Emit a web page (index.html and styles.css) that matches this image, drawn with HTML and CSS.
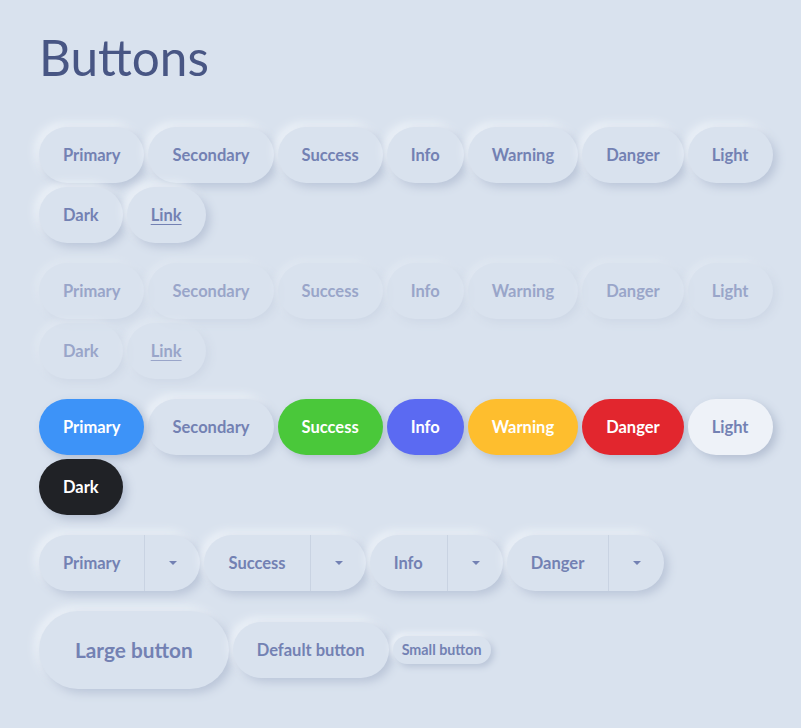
FILE: index.html
```html
<!DOCTYPE html>
<html lang="en">
<head>
<meta charset="utf-8">
<title>Buttons</title>
<link rel="stylesheet" href="styles.css">
</head>
<body>
<main class="page">
  <h1 class="title">Buttons</h1>

  <section class="row">
    <button class="btn">Primary</button>
    <button class="btn">Secondary</button>
    <button class="btn">Success</button>
    <button class="btn">Info</button>
    <button class="btn">Warning</button>
    <button class="btn">Danger</button>
    <button class="btn">Light</button>
    <button class="btn">Dark</button>
    <button class="btn btn-link">Link</button>
  </section>

  <section class="row row-disabled">
    <button class="btn" disabled>Primary</button>
    <button class="btn" disabled>Secondary</button>
    <button class="btn" disabled>Success</button>
    <button class="btn" disabled>Info</button>
    <button class="btn" disabled>Warning</button>
    <button class="btn" disabled>Danger</button>
    <button class="btn" disabled>Light</button>
    <button class="btn" disabled>Dark</button>
    <button class="btn btn-link" disabled>Link</button>
  </section>

  <section class="row">
    <button class="btn btn-primary">Primary</button>
    <button class="btn">Secondary</button>
    <button class="btn btn-success">Success</button>
    <button class="btn btn-info">Info</button>
    <button class="btn btn-warning">Warning</button>
    <button class="btn btn-danger">Danger</button>
    <button class="btn btn-light">Light</button>
    <button class="btn btn-dark">Dark</button>
  </section>

  <section class="row">
    <div class="btn-group">
      <button class="btn-part">Primary</button>
      <button class="btn-part btn-toggle" aria-label="Toggle"><span class="caret"></span></button>
    </div>
    <div class="btn-group">
      <button class="btn-part">Success</button>
      <button class="btn-part btn-toggle" aria-label="Toggle"><span class="caret"></span></button>
    </div>
    <div class="btn-group">
      <button class="btn-part">Info</button>
      <button class="btn-part btn-toggle" aria-label="Toggle"><span class="caret"></span></button>
    </div>
    <div class="btn-group">
      <button class="btn-part">Danger</button>
      <button class="btn-part btn-toggle" aria-label="Toggle"><span class="caret"></span></button>
    </div>
  </section>

  <section class="row row-sizes">
    <button class="btn btn-lg">Large button</button>
    <button class="btn">Default button</button>
    <button class="btn btn-sm">Small button</button>
  </section>
</main>
</body>
</html>
```

FILE: styles.css
```css
* { box-sizing: border-box; }

html, body {
  margin: 0;
  background: #d9e2ee;
}

body {
  font-family: "Lato", "Noto Sans", sans-serif;
  color: #7381b3;
}

.page {
  padding: 27px 20px 20px 39px;
}

.title {
  margin: 0 0 40px 0;
  font-size: 49.5px;
  line-height: 60px;
  font-weight: 400;
  color: #485684;
}

.row {
  display: flex;
  flex-wrap: wrap;
  align-items: center;
  gap: 4px;
  margin-bottom: 20px;
}

.btn {
  font-family: inherit;
  font-size: 16.5px;
  font-weight: 700;
  line-height: 24px;
  color: #7381b3;
  background: #d9e2ee;
  border: 0;
  border-radius: 28px;
  padding: 16px 24px;
  box-shadow: 4px 4px 10px #bac5d8, -4px -4px 10px #eef3f9;
}

.btn-link {
  text-decoration: underline;
  text-underline-offset: 3px;
}

.row-disabled .btn {
  opacity: 0.62;
  box-shadow: 3px 3px 8px #c7d1e1, -3px -3px 8px #eaf0f7;
}

.btn-primary { background: #3d93f8; color: #fff; }
.btn-success { background: #4ac83a; color: #fff; }
.btn-info { background: #5b6af2; color: #fff; }
.btn-warning { background: #febe2e; color: #fff; }
.btn-danger { background: #e2262e; color: #fff; }
.btn-light { background: #eef2f8; color: #7381b3; }
.btn-dark { background: #202226; color: #fff; }

.btn-primary, .btn-success, .btn-info, .btn-warning, .btn-danger, .btn-light, .btn-dark {
  position: relative;
  z-index: 1;
  box-shadow: 4px 4px 10px #b4bfd2;
}

.btn-group {
  display: flex;
  border-radius: 28px;
  background: #d9e2ee;
  box-shadow: 4px 4px 10px #bac5d8, -4px -4px 10px #eef3f9;
}

.btn-part {
  font-family: inherit;
  font-size: 16.5px;
  font-weight: 700;
  line-height: 24px;
  color: #7381b3;
  background: transparent;
  border: 0;
  padding: 16px 24px;
  border-radius: 28px 0 0 28px;
}

.btn-toggle {
  border-left: 1px solid #c9d3e2;
  border-radius: 0 28px 28px 0;
  padding: 16px 23px 16px 24px;
  display: flex;
  align-items: center;
  justify-content: center;
  width: 56px;
  height: 56px;
}

.caret {
  display: block;
  width: 0;
  height: 0;
  border-left: 4px solid transparent;
  border-right: 4px solid transparent;
  border-top: 4px solid #7381b3;
}

.btn-lg {
  font-size: 20.8px;
  line-height: 30px;
  padding: 24px 36px;
  border-radius: 40px;
}

.btn-sm {
  font-size: 14.3px;
  line-height: 18px;
  padding: 5px 9px;
  border-radius: 14px;
  box-shadow: 3px 3px 6px #bac5d8, -3px -3px 6px #eef3f9;
}
```
